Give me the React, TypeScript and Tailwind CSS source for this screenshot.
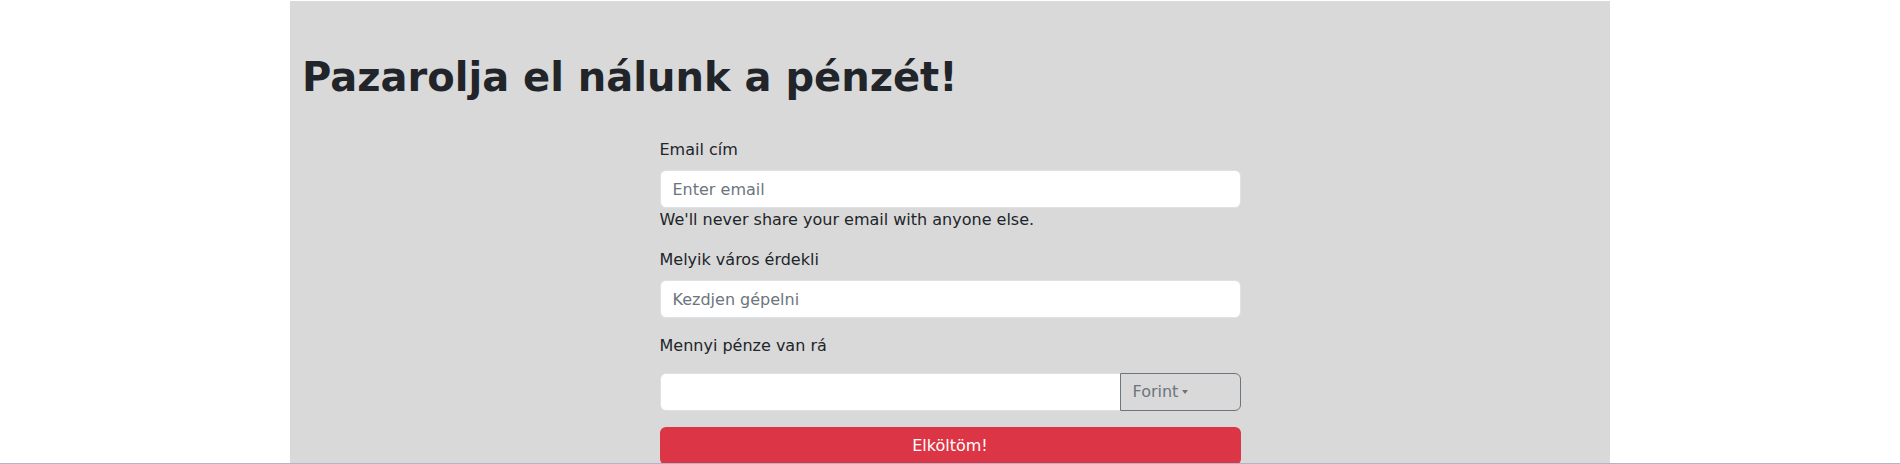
import { useState } from "react";

export default function App() {
  const [email, setEmail] = useState("");
  const [city, setCity] = useState("");
  const [amount, setAmount] = useState("");

  return (
    <div className="flex h-[464px] flex-col overflow-hidden bg-white font-['DejaVu_Sans',sans-serif] text-[#212529]">
      <div className="flex-1 overflow-hidden pt-px">
        <div className="mx-auto h-full w-[1320px] bg-[#d9d9d9] px-3 pt-[52px]">
          <h1 className="text-[40px] font-bold leading-[48px]">
            Pazarolja el nálunk a pénzét!
          </h1>

          {/* Űrlap */}
          <form className="mx-auto mt-[37px] w-[581px]" onSubmit={(e) => e.preventDefault()}>
            <div className="mb-4">
              <label className="mb-2 block text-base leading-6">Email cím</label>
              <input
                type="email"
                placeholder="Enter email"
                className="block h-[38px] w-full rounded-md border border-[#dee2e6] bg-white px-3 text-base leading-6 placeholder:text-[#6c757d] focus:outline-none"
                value={email}
                onChange={(e) => setEmail(e.target.value)}
              />
              <div className="text-base leading-6">
                We'll never share your email with anyone else.
              </div>
            </div>

            <div className="mb-4">
              <label className="mb-2 block text-base leading-6">Melyik város érdekli</label>
              <input
                type="text"
                placeholder="Kezdjen gépelni"
                className="block h-[38px] w-full rounded-md border border-[#dee2e6] bg-white px-3 text-base leading-6 placeholder:text-[#6c757d] focus:outline-none"
                value={city}
                onChange={(e) => setCity(e.target.value)}
              />
            </div>

            <div className="mb-4">
              <label className="mb-[15px] block text-base leading-6">Mennyi pénze van rá</label>
              <div className="flex h-[38px]">
                <input
                  type="text"
                  className="h-full min-w-0 flex-1 rounded-l-md border border-r-0 border-[#dee2e6] bg-white px-3 text-base focus:outline-none"
                  value={amount}
                  onChange={(e) => setAmount(e.target.value)}
                />
                <button
                  type="button"
                  className="flex h-full w-[121px] items-center rounded-r-md border border-[#6c757d] px-3 text-base text-[#6c757d]"
                >
                  Forint
                  <span className="ml-1 h-0 w-0 border-x-[3.5px] border-t-[4px] border-x-transparent border-t-[#6c757d]" />
                </button>
              </div>
            </div>

            <button
              type="submit"
              className="h-[38px] w-full rounded-md bg-[#dc3545] text-base text-white"
            >
              Elköltöm!
            </button>
          </form>
        </div>
      </div>
      <div className="h-px bg-[#b4b4c4]" />
    </div>
  );
}
